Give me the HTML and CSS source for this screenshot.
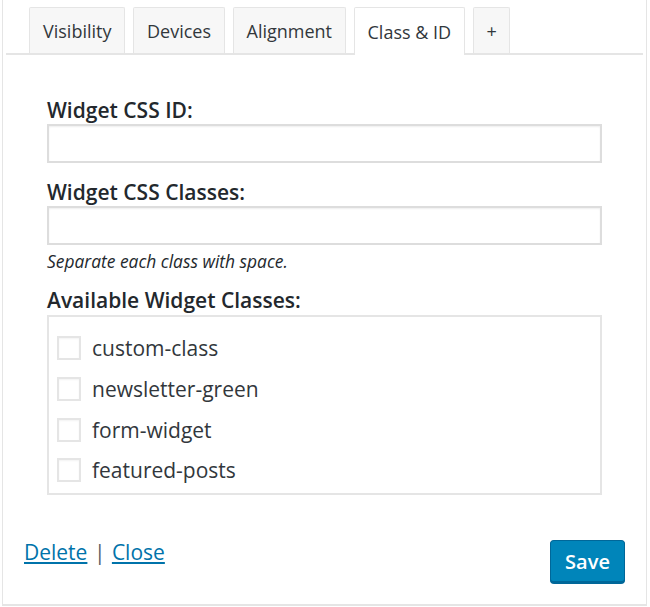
FILE: index.html
```html
<!DOCTYPE html>
<html>
<head>
<meta charset="utf-8">
<link rel="stylesheet" href="styles.css">
</head>
<body>
<div class="panel">
  <div class="tabs">
    <div class="tab">Visibility</div>
    <div class="tab">Devices</div>
    <div class="tab">Alignment</div>
    <div class="tab active">Class &amp; ID</div>
    <div class="tab">+</div>
  </div>
  <div class="content">
    <label class="label first">Widget CSS ID:</label>
    <div class="input"></div>
    <label class="label">Widget CSS Classes:</label>
    <div class="input"></div>
    <p class="hint">Separate each class with space.</p>
    <label class="label third">Available Widget Classes:</label>
    <div class="list">
      <div class="row"><span class="check"></span><span>custom-class</span></div>
      <div class="row"><span class="check"></span><span>newsletter-green</span></div>
      <div class="row"><span class="check"></span><span>form-widget</span></div>
      <div class="row"><span class="check"></span><span>featured-posts</span></div>
    </div>
  </div>
  <div class="footer">
    <div class="links"><a href="#">Delete</a> <span class="sep">|</span> <a href="#">Close</a></div>
    <button class="save">Save</button>
  </div>
</div>
</body>
</html>
```
FILE: styles.css
```css
html, body {
  margin: 0;
  padding: 0;
  background: #ffffff;
}
body {
  font-family: "Open Sans", "Noto Sans", sans-serif;
  color: #23282d;
}
.panel {
  margin-left: 2px;
  width: 637px;
  height: 604px;
  border-left: 1px solid #e5e5e5;
  border-right: 1px solid #e5e5e5;
  border-bottom: 2px solid #e5e5e5;
  padding: 0 3px;
  box-sizing: content-box;
}
.tabs {
  display: flex;
  gap: 8px;
  padding: 7px 0 0 23px;
  border-bottom: 2px solid #e5e5e5;
  height: 46px;
  align-items: flex-end;
}
.tab {
  height: 46px;
  box-sizing: border-box;
  padding: 0 12.5px 0 13px;
  display: flex;
  align-items: center;
  font-size: 18px;
  color: #32373c;
  background: #f7f7f7;
  border: 1px solid #e5e5e5;
  border-bottom: none;
  border-radius: 2px 2px 0 0;
}
.tab.active {
  background: #ffffff;
  height: 48px;
  margin-bottom: -2px;
}
.content {
  display: flex;
  flex-direction: column;
  padding: 0 41px 0 41px;
}
.label {
  display: block;
  font-size: 21px;
  font-weight: 600;
  line-height: 26px;
  color: #23282d;
  margin-top: 16px;
  margin-bottom: 1px;
}
.label.first {
  margin-top: 42px;
}
.label.third {
  margin-top: 15px;
  margin-bottom: 2px;
}
.input {
  height: 39px;
  box-sizing: border-box;
  border: 2px solid #dddddd;
  box-shadow: inset 0 1px 2px rgba(0,0,0,0.07);
}
.hint {
  margin: 5px 0 0;
  font-size: 17.4px;
  font-style: italic;
  line-height: 22px;
  color: #23282d;
}
.list {
  height: 180px;
  box-sizing: border-box;
  border: 2px solid #e5e5e5;
  padding: 11px 0 0 8px;
}
.row {
  display: flex;
  align-items: center;
  height: 40.7px;
  font-size: 21px;
  color: #32373c;
}
.check {
  width: 24px;
  height: 24px;
  box-sizing: border-box;
  border: 2px solid #e5e5e5;
  box-shadow: inset 0 1px 2px rgba(0,0,0,0.05);
  margin-right: 11px;
}
.footer {
  display: flex;
  justify-content: space-between;
  align-items: flex-start;
  padding: 45px 18px 0 18px;
}
.links {
  font-size: 21px;
  line-height: 28px;
  color: #555d66;
  margin-top: -2px;
}
.links a {
  color: #0073aa;
  text-decoration: underline;
}
.sep {
  margin: 0 1px;
}
.save {
  width: 75px;
  height: 43px;
  background: #0085ba;
  border: 1px solid #006799;
  border-bottom-width: 2px;
  border-radius: 4px;
  color: #ffffff;
  font-family: "Open Sans", "Noto Sans", sans-serif;
  font-size: 20px;
  font-weight: 600;
  padding: 0;
  box-shadow: 0 1px 0 #006799;
}
```
